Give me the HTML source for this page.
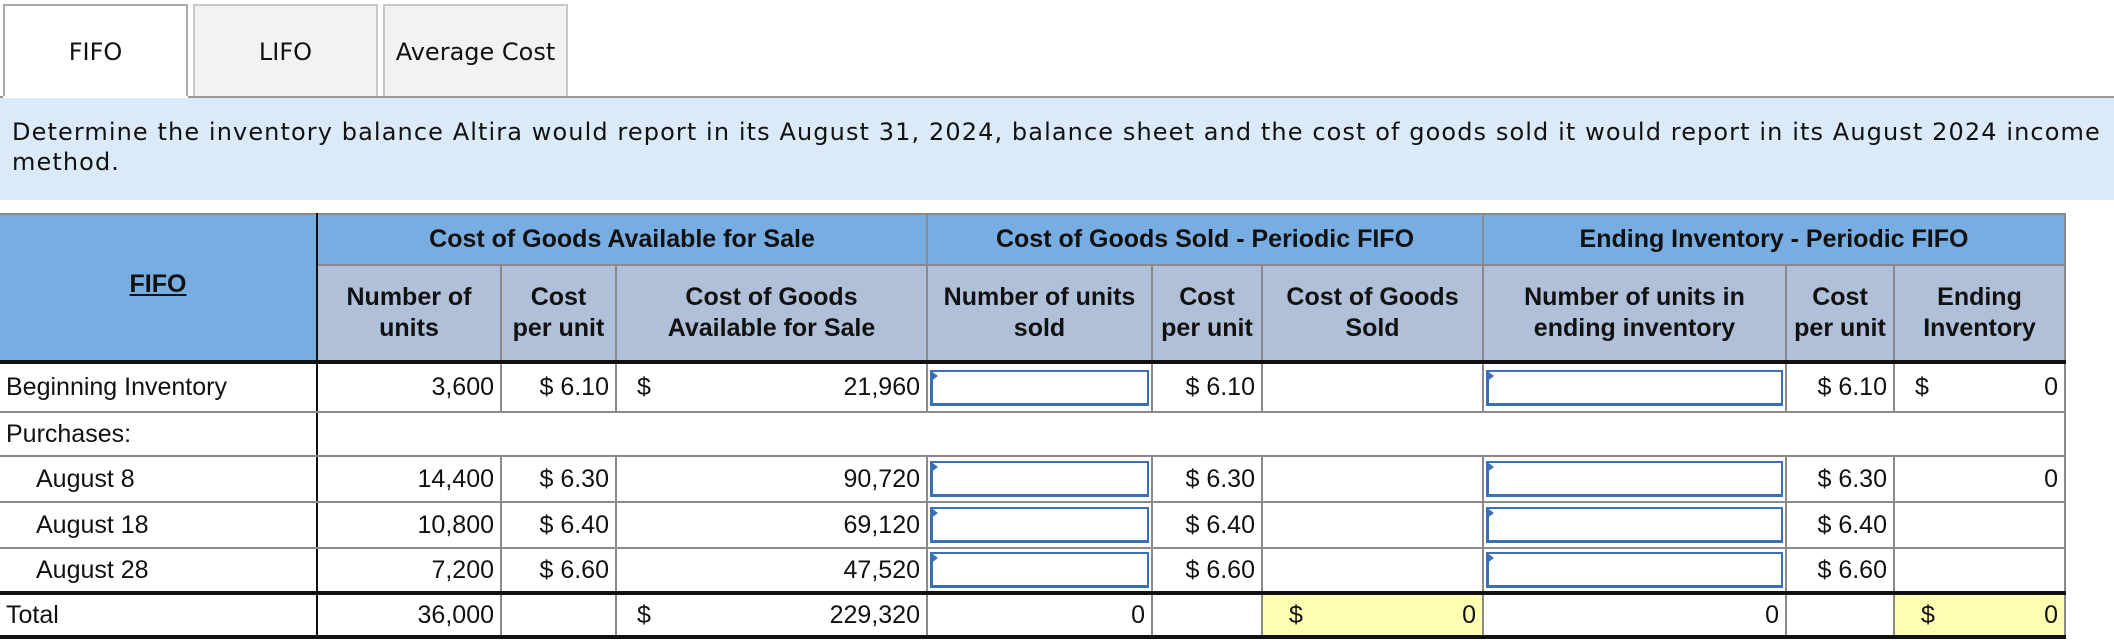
<!DOCTYPE html>
<html><head><meta charset="utf-8">
<style>
body{margin:0;width:2114px;height:644px;overflow:hidden;background:#fff;font-family:"Liberation Sans",Arial,sans-serif;position:relative}
.tab{position:absolute;top:4px;height:93px;box-sizing:border-box;border:2px solid #c8c8c8;border-bottom:none;background:#f2f2f2;font-family:"DejaVu Sans",Verdana,sans-serif;font-size:24px;display:flex;align-items:center;justify-content:center;color:#111}
.tab.on{background:#fff;border-color:#aaa}
.line{position:absolute;left:0;width:2114px;top:96px;height:2px;background:#999}
.instr{position:absolute;left:0;top:98px;width:2114px;height:102px;background:#dbeaf8;font-family:"DejaVu Sans",Verdana,sans-serif;font-size:24px;letter-spacing:1.1px;color:#111;box-sizing:border-box;padding:19px 0 0 12px;line-height:30px;white-space:nowrap;overflow:hidden}
table{position:absolute;left:0;top:213px;border-collapse:collapse;table-layout:fixed;font-size:25px;color:#111}
td{padding:0 6px;border:2px solid #8a8a8a;white-space:nowrap;overflow:hidden}
.h1{background:#78ade2;font-weight:bold;text-align:center;height:49px}
.h2{background:#b0c0d8;font-weight:bold;text-align:center;line-height:31px;height:94px;padding:0 2px}
.lab{border-left:none;border-right:2px solid #111}
.r{text-align:right}
.inp{padding:3px 2px}
.box{height:36px;border:3px solid #3a70b8;border-top-width:2px;border-right-width:2px;box-sizing:border-box;position:relative;background:#fff}
.box:before{content:"";position:absolute;left:-3px;top:-2px;border-left:8px solid #3a70b8;border-top:6px solid transparent;border-bottom:6px solid transparent}
.y{background:#ffffb3}
.thick td{border-top:4px solid #111}
.tot td{border-bottom:4px solid #111}
.dol{display:flex;justify-content:space-between}
</style></head><body>
<div class="tab on" style="left:3px;width:185px">FIFO</div>
<div class="tab" style="left:193px;width:185px">LIFO</div>
<div class="tab" style="left:383px;width:185px">Average Cost</div>
<div class="line"></div>
<div class="line" style="left:3px;width:185px;background:#fff"></div>
<div class="instr">Determine the inventory balance Altira would report in its August 31, 2024, balance sheet and the cost of goods sold it would report in its August 2024 income<br>method.</div>
<table>
<colgroup><col style="width:317px"><col style="width:184px"><col style="width:115px"><col style="width:311px"><col style="width:225px"><col style="width:110px"><col style="width:221px"><col style="width:303px"><col style="width:108px"><col style="width:171px"></colgroup>
<tr><td rowspan="2" class="h1 lab" style="border-left:none;vertical-align:middle"><u>FIFO</u><div style="height:6px"></div></td>
<td colspan="3" class="h1" style="border-left:2px solid #111">Cost of Goods Available for Sale</td>
<td colspan="3" class="h1" style="border-left:2px solid #111">Cost of Goods Sold - Periodic FIFO</td>
<td colspan="3" class="h1">Ending Inventory - Periodic FIFO</td></tr>
<tr><td class="h2">Number of<br>units</td><td class="h2">Cost<br>per unit</td><td class="h2">Cost of Goods<br>Available for Sale</td><td class="h2" style="border-left:2px solid #111">Number of units<br>sold</td><td class="h2">Cost<br>per unit</td><td class="h2">Cost of Goods<br>Sold</td><td class="h2">Number of units in<br>ending inventory</td><td class="h2">Cost<br>per unit</td><td class="h2">Ending<br>Inventory</td></tr>
<tr class="thick" style="height:50px"><td class="lab">Beginning Inventory</td><td class="r">3,600</td><td class="r">$ 6.10</td><td><div class="dol"><span style="padding-left:14px">$</span><span>21,960</span></div></td><td class="inp" style="border-left:2px solid #111"><div class="box"></div></td><td class="r">$ 6.10</td><td></td><td class="inp"><div class="box"></div></td><td class="r">$ 6.10</td><td><div class="dol"><span style="padding-left:14px">$</span><span>0</span></div></td></tr>
<tr style="height:44px"><td class="lab">Purchases:</td><td colspan="9"></td></tr>
<tr style="height:46px"><td class="lab" style="padding-left:36px">August 8</td><td class="r">14,400</td><td class="r">$ 6.30</td><td class="r">90,720</td><td class="inp" style="border-left:2px solid #111"><div class="box"></div></td><td class="r">$ 6.30</td><td></td><td class="inp"><div class="box"></div></td><td class="r">$ 6.30</td><td class="r">0</td></tr>
<tr style="height:46px"><td class="lab" style="padding-left:36px">August 18</td><td class="r">10,800</td><td class="r">$ 6.40</td><td class="r">69,120</td><td class="inp" style="border-left:2px solid #111"><div class="box"></div></td><td class="r">$ 6.40</td><td></td><td class="inp"><div class="box"></div></td><td class="r">$ 6.40</td><td></td></tr>
<tr style="height:44px"><td class="lab" style="padding-left:36px">August 28</td><td class="r">7,200</td><td class="r">$ 6.60</td><td class="r">47,520</td><td class="inp" style="border-left:2px solid #111"><div class="box"></div></td><td class="r">$ 6.60</td><td></td><td class="inp"><div class="box"></div></td><td class="r">$ 6.60</td><td></td></tr>
<tr class="thick tot" style="height:44px"><td class="lab">Total</td><td class="r">36,000</td><td></td><td><div class="dol"><span style="padding-left:14px">$</span><span>229,320</span></div></td><td class="r" style="border-left:2px solid #111">0</td><td></td><td class="y"><div class="dol"><span style="padding-left:20px">$</span><span>0</span></div></td><td class="r">0</td><td></td><td class="y"><div class="dol"><span style="padding-left:20px">$</span><span>0</span></div></td></tr>
</table>
</body></html>
